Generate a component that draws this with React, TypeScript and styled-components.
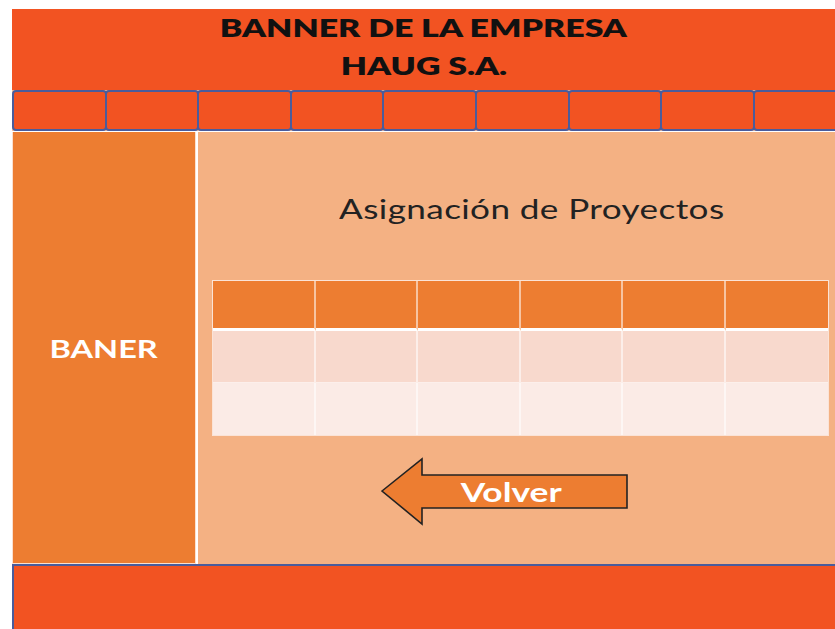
import styled, { createGlobalStyle } from "styled-components";

const GlobalStyle = createGlobalStyle`
    html, body {
        margin: 0;
        padding: 0;
        background: #fff;
        font-family: Lato, "Open Sans", sans-serif;
    }
`;

// the mockup is stretched sideways, so the text is widened to follow it
const Wide = styled.span<{ $x: number }>`
    display: inline-block;
    transform: scaleX(${(p) => p.$x});
`;

const Page = styled.div`
    width: 835px;
    height: 629px;
    padding: 9px 0 0 12px;
    box-sizing: border-box;
    display: flex;
    flex-direction: column;
    overflow: hidden;
`;

const Banner = styled.header`
    flex: 0 0 81px;
    background: #f25322;
    display: flex;
    flex-direction: column;
    align-items: center;
    h1 {
        margin: 0;
        font-size: 24px;
        line-height: 38px;
        font-weight: 800;
        color: #111;
        text-align: center;
    }
`;

const Nav = styled.nav`
    flex: 0 0 41px;
    display: flex;
    background: #f6c29e;
    overflow: hidden;
`;

const Tab = styled.div`
    flex: 0 0 94.6px;
    margin-right: -2px;
    box-sizing: border-box;
    background: #f25322;
    border: 2px solid #4a5c9c;
    border-radius: 4px;
`;

const Body = styled.div`
    flex: 0 0 432px;
    display: flex;
    border-top: 1px solid #fff;
`;

const Sidebar = styled.aside`
    flex: 0 0 184px;
    box-sizing: border-box;
    background: #ed7d31;
    border: 1px solid #fbe0cf;
    border-top: none;
    display: flex;
    align-items: center;
    justify-content: center;
    color: #fff;
    font-size: 25px;
    font-weight: 700;
`;

const Main = styled.main`
    flex: 1;
    background: #f4b183;
    border-left: 2px solid #fff;
    display: flex;
    flex-direction: column;
    align-items: center;
    padding: 62px 6px 0 14px;
`;

const Title = styled.h2`
    margin: 0 0 0 22px;
    font-size: 26px;
    line-height: 30px;
    font-weight: 400;
    color: #222;
    letter-spacing: 0.3px;
`;

const Table = styled.div`
    margin-top: 56px;
    align-self: stretch;
    display: grid;
    grid-template-columns: repeat(6, 1fr);
    grid-template-rows: 50px 52px 52px;
    border: 1px solid #fbe3d6;
`;

const Cell = styled.div<{ $row: number }>`
    background: ${(p) =>
        p.$row === 0 ? "#ed7d31" : p.$row === 1 ? "#f8d9cd" : "#fbebe6"};
    border-right: 2px solid rgba(255, 255, 255, 0.55);
    border-bottom: ${(p) =>
        p.$row === 0 ? "3px solid #fff" : p.$row === 1 ? "1px solid rgba(255,255,255,0.6)" : "none"};
    &:nth-child(6n) {
        border-right: none;
    }
`;

const BackButton = styled.button`
    margin-top: 21px;
    margin-right: 32px;
    display: grid;
    width: 250px;
    height: 70px;
    padding: 0;
    border: none;
    background: none;
    cursor: pointer;
    > * {
        grid-area: 1 / 1;
    }
    > span {
        align-self: center;
        justify-self: center;
        margin-left: 14px;
        color: #fff;
        font-family: Lato, sans-serif;
        font-size: 26px;
        font-weight: 700;
    }
`;

const Footer = styled.footer`
    flex: 1;
    background: #f25322;
    border-top: 2px solid #4a5c9c;
    border-left: 2px solid #4a5c9c;
`;

export default function App() {
    return (
        <>
            <GlobalStyle />
            <Page>
                <Banner>
                    <h1><Wide $x={1.41}>BANNER DE LA EMPRESA</Wide></h1>
                    <h1><Wide $x={1.41}>HAUG S.A.</Wide></h1>
                </Banner>
                <Nav>
                    {Array.from({ length: 9 }).map((_, i) => (
                        <Tab key={i} />
                    ))}
                </Nav>
                <Body>
                    <Sidebar><Wide $x={1.3}>BANER</Wide></Sidebar>
                    <Main>
                        <Title><Wide $x={1.35}>Asignación de Proyectos</Wide></Title>
                        <Table>
                            {Array.from({ length: 18 }).map((_, i) => (
                                <Cell key={i} $row={Math.floor(i / 6)} />
                            ))}
                        </Table>
                        <BackButton>
                            <svg width="250" height="70" viewBox="0 0 250 70">
                                <path
                                    d="M2 34 L42 2 L42 18 L247 18 L247 51 L42 51 L42 67 Z"
                                    fill="#ed7d31"
                                    stroke="#222"
                                    strokeWidth="1.6"
                                    strokeLinejoin="miter"
                                />
                            </svg>
                            <span><Wide $x={1.36}>Volver</Wide></span>
                        </BackButton>
                    </Main>
                </Body>
                <Footer />
            </Page>
        </>
    );
}
